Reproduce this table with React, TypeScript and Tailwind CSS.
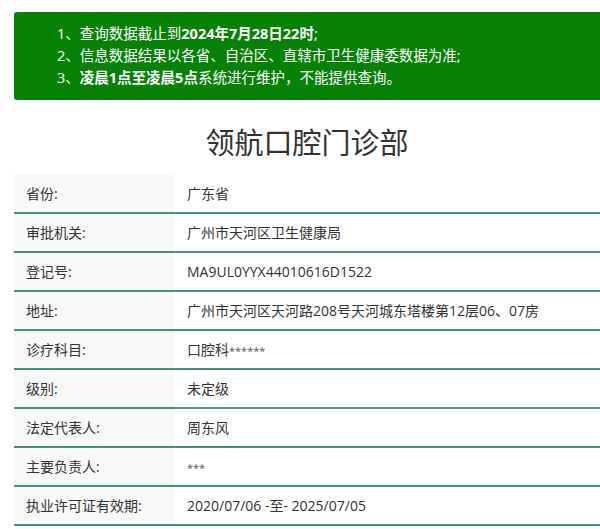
import React from "react";

const rows: [string, string][] = [
  ["省份:", "广东省"],
  ["审批机关:", "广州市天河区卫生健康局"],
  ["登记号:", "MA9UL0YYX44010616D1522"],
  ["地址:", "广州市天河区天河路208号天河城东塔楼第12层06、07房"],
  ["诊疗科目:", "口腔科******"],
  ["级别:", "未定级"],
  ["法定代表人:", "周东风"],
  ["主要负责人:", "***"],
  ["执业许可证有效期:", "2020/07/06 -至- 2025/07/05"],
];

const font = { fontFamily: '"Open Sans", "Noto Sans CJK SC", sans-serif' };

function Value({ v }: { v: string }) {
  const m = v.match(/^([^*]*)(\**)$/);
  if (!m || !m[2]) return <>{v}</>;
  return (
    <>
      {m[1]}
      <span className="text-[11px] text-[#555]">{m[2]}</span>
    </>
  );
}

export default function App() {
  return (
    <div className="flex h-[529px] w-[600px] flex-col overflow-hidden bg-white pl-[14px] pt-[12px] text-[#333]" style={font}>
      <div className="flex h-[88px] flex-col rounded-l-[3px] bg-[#078207] pl-[43px] pt-[11px] text-[14.5px] leading-[22px] text-white">
        <div>
          1、查询数据截止到<b>2024年7月28日22时</b>;
        </div>
        <div>2、信息数据结果以各省、自治区、直辖市卫生健康委数据为准;</div>
        <div>
          3、<b>凌晨1点至凌晨5点</b>系统进行维护，不能提供查询。
        </div>
      </div>

      <h1 className="mt-[23px] h-[52px] text-center text-[29px] leading-[40px] text-[#333]">
        领航口腔门诊部
      </h1>

      <div className="flex flex-col">
        {rows.map(([k, v]) => (
          <div key={k} className="flex h-[39px] border-b-2 border-[#4a9270] text-[14px]">
            <div className="flex w-[161px] items-center bg-[#f8f8f8] pl-[12px]">{k}</div>
            <div className="flex flex-1 items-center pl-[12px]">
              <span>
                <Value v={v} />
              </span>
            </div>
          </div>
        ))}
      </div>
    </div>
  );
}
